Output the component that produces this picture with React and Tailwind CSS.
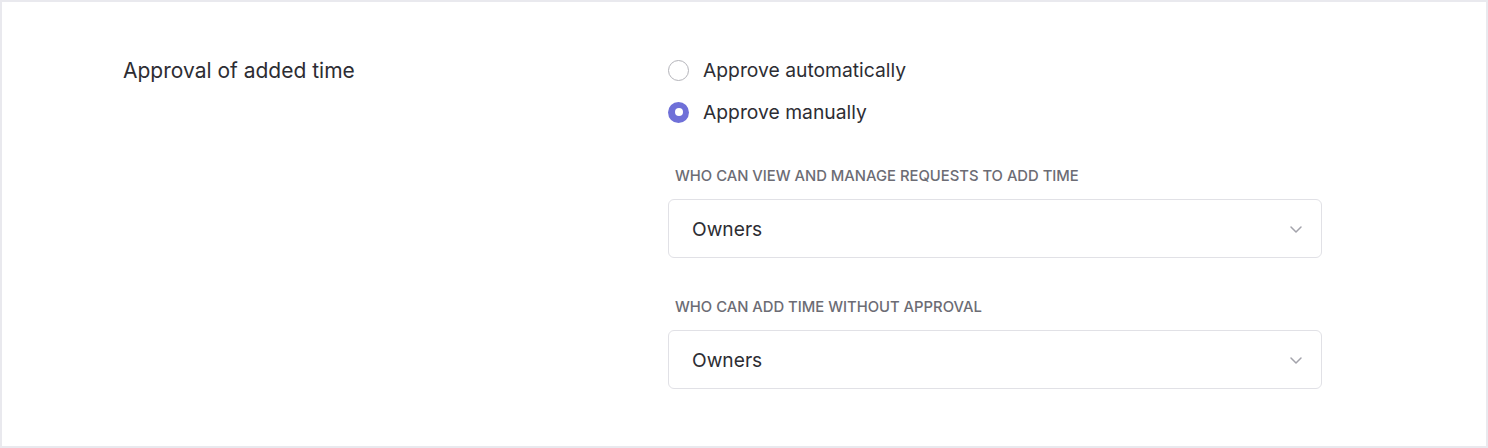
import { useState } from 'react';

function Radio({ checked, label, onClick }) {
  return (
    <button type="button" onClick={onClick} className="flex h-[28px] items-center gap-[14px] text-left">
      {checked ? (
        <span className="flex h-[21px] w-[21px] items-center justify-center rounded-full bg-[#6f70d8]">
          <span className="h-[8px] w-[8px] rounded-full bg-white" />
        </span>
      ) : (
        <span className="h-[21px] w-[21px] rounded-full border-[1.5px] border-[#b4b4ba] bg-white" />
      )}
      <span className="pt-[1px] text-[19.3px] text-[#2d2d33]">{label}</span>
    </button>
  );
}

function Select({ label, value }) {
  return (
    <div className="flex flex-col">
      <div className="pl-[7px] text-[14.8px] font-medium uppercase leading-[16px] text-[#6c6c74]">{label}</div>
      <div className="mt-[15px] flex h-[59px] items-center justify-between rounded-[6px] border border-[#e1e1e6] bg-white pl-[23px] pr-[17px]">
        <span className="pt-[2px] text-[19.2px] text-[#2d2d33]">{value}</span>
        <svg width="16" height="16" viewBox="0 0 16 16" fill="none">
          <path d="M3 6l5 5 5-5" stroke="#a3a3ab" strokeWidth="1.5" strokeLinecap="round" strokeLinejoin="round" />
        </svg>
      </div>
    </div>
  );
}

export default function App() {
  const [mode, setMode] = useState('manual');

  return (
    <div className="h-[448px] w-[1488px] border-2 border-[#e9e9ee] bg-white font-['Inter',sans-serif]">
      <div className="flex pl-[121px] pt-[54px]">
        <div className="w-[545px] pt-[1px] text-[21px] leading-[28px] text-[#2d2d33]">Approval of added time</div>
        <div className="flex w-[654px] flex-col">
          <div className="flex flex-col gap-[14px]">
            <Radio checked={mode === 'auto'} label="Approve automatically" onClick={() => setMode('auto')} />
            <Radio checked={mode === 'manual'} label="Approve manually" onClick={() => setMode('manual')} />
          </div>
          <div className="mt-[42px]">
            <Select label="Who can view and manage requests to add time" value="Owners" />
          </div>
          <div className="mt-[41px]">
            <Select label="Who can add time without approval" value="Owners" />
          </div>
        </div>
      </div>
    </div>
  );
}
